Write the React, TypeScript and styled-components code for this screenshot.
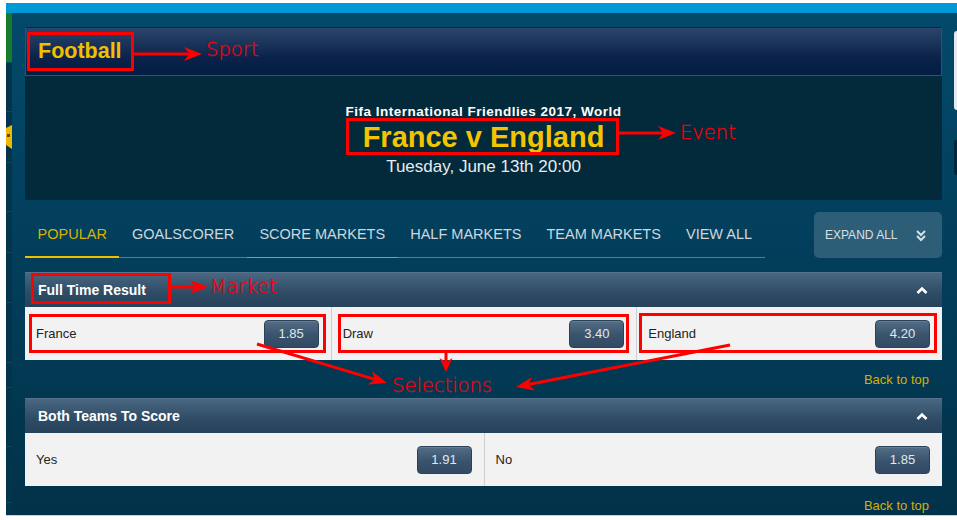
import React from "react";
import styled, { createGlobalStyle } from "styled-components";

const Global = createGlobalStyle`
  html, body { margin: 0; padding: 0; background: #ffffff; }
  body { font-family: "Liberation Sans", Arial, sans-serif; }
  * { box-sizing: border-box; }
`;

const Page = styled.div`
  position: relative;
  width: 957px;
  height: 520px;
  padding: 3px 0 0 6px;
  background: #ffffff;
  overflow: hidden;
`;

const TopBar = styled.div`
  height: 10px;
  background: #0098d5;
`;

const Body = styled.div`
  display: flex;
  height: 503px;
  overflow: hidden;
  background: linear-gradient(#03496a, #023f5c 45%, #02324a);
  border-bottom: 1px solid #c9d3d8;
`;

const LeftRail = styled.aside`
  width: 6px;
  flex: none;
  display: flex;
  flex-direction: column;
  background: #02344c;
`;

const RailCell = styled.div<{ $h: number; $c?: string }>`
  height: ${(p) => p.$h}px;
  flex: none;
  background: ${(p) => p.$c || "#02344c"};
  border-bottom: 1px solid #0b4863;
  display: flex;
  align-items: center;
  overflow: hidden;
`;

const RightRail = styled.aside`
  width: 3px;
  flex: none;
  margin-left: auto;
  display: flex;
  flex-direction: column;
  padding-top: 18px;
  gap: 30px;
`;

const RightBlock = styled.div<{ $h: number; $c: string }>`
  height: ${(p) => p.$h}px;
  flex: none;
  background: ${(p) => p.$c};
  border-radius: 3px 0 0 3px;
`;

const Main = styled.main`
  width: 917px;
  flex: none;
  margin-left: 13px;
  padding-top: 14px;
  display: flex;
  flex-direction: column;
  & > * {
    flex-shrink: 0;
  }
`;

const SportHeader = styled.header`
  height: 49px;
  display: flex;
  align-items: center;
  padding-left: 12px;
  border: 1px solid #34506f;
  border-top-color: #0d2442;
  background: linear-gradient(#2c456a, #0a2249 65%, #041d45);
`;

const SportName = styled.h1`
  margin: 0;
  font-size: 21.5px;
  font-weight: 700;
  color: #f2bf00;
  line-height: 1;
`;

const EventInfo = styled.section`
  height: 124px;
  background: #022a3b;
  display: flex;
  flex-direction: column;
  align-items: center;
  padding-top: 28px;
`;

const Competition = styled.div`
  font-size: 13.5px;
  line-height: 16px;
  font-weight: 700;
  letter-spacing: 0.5px;
  color: #ffffff;
`;

const EventTitle = styled.h2`
  margin: 1px 0 0;
  font-size: 29px;
  line-height: 32px;
  font-weight: 700;
  color: #f5c400;
`;

const EventDate = styled.div`
  margin-top: 4px;
  font-size: 17px;
  line-height: 20px;
  color: #e6ecef;
`;

const TabsRow = styled.div`
  margin-top: 12px;
  height: 46px;
  display: flex;
  justify-content: space-between;
`;

const TabList = styled.nav`
  display: flex;
  align-items: flex-start;
  height: 46px;
  border-bottom: 1px solid #577a8e;
`;

const Tab = styled.div<{ $active?: boolean; $hover?: boolean }>`
  height: 46px;
  margin-bottom: -1px;
  padding: 0 12.5px 0 12.6px;
  display: flex;
  align-items: center;
  font-size: 14.5px;
  color: ${(p) => (p.$active ? "#d9b300" : "#cdd7de")};
  border-bottom: ${(p) =>
    p.$active ? "2px solid #f0c000" : p.$hover ? "1px solid #a89c3c" : "1px solid transparent"};
  padding-bottom: ${(p) => (p.$active ? "0" : "1px")};
  white-space: nowrap;
`;

const ExpandButton = styled.button`
  width: 128px;
  height: 46px;
  border: 0;
  border-radius: 5px;
  background: #2d5e77;
  padding: 0 15px 0 11px;
  display: flex;
  align-items: center;
  justify-content: space-between;
  font-family: "Liberation Sans", Arial, sans-serif;
  font-size: 12px;
  color: #d6e0e6;
`;

const Market = styled.section`
  display: flex;
  flex-direction: column;
  & > * {
    flex-shrink: 0;
  }
`;

const FirstMarket = styled(Market)`
  margin-top: 14px;
`;

const MarketHeader = styled.div`
  height: 35px;
  display: flex;
  align-items: center;
  justify-content: space-between;
  padding: 0 14px 0 13px;
  border-top: 1px solid #56728c;
  background: linear-gradient(#4a6781, #2e4b65 60%, #27425b);
`;

const MarketName = styled.h3`
  margin: 0;
  font-size: 14px;
  font-weight: 700;
  color: #ffffff;
`;

const SelectionRow = styled.div<{ $cols: number }>`
  height: 53px;
  display: grid;
  grid-template-columns: repeat(${(p) => p.$cols}, 1fr);
  background: #f2f2f2;
`;

const Selection = styled.div`
  display: flex;
  align-items: center;
  justify-content: space-between;
  padding: 0 12px 0 11px;
  & + & {
    border-left: 1px solid #cfcfcf;
  }
`;

const SelectionName = styled.span`
  font-size: 13px;
  color: #222222;
`;

const Odds = styled.button`
  width: 55px;
  height: 28px;
  border: 1px solid #2b4157;
  border-radius: 4px;
  background: linear-gradient(#536d87, #3a536d 55%, #324a63);
  box-shadow: inset 0 1px 0 rgba(255, 255, 255, 0.12);
  font-family: "Liberation Sans", Arial, sans-serif;
  font-size: 13px;
  color: #e1e7ed;
  padding: 0;
`;

const BackToTop = styled.div`
  height: 38px;
  display: flex;
  align-items: center;
  justify-content: flex-end;
  padding-right: 13px;
  font-size: 13px;
  color: #d6b000;
`;

const Overlay = styled.svg`
  position: absolute;
  left: 0;
  top: 0;
  pointer-events: none;
`;

const Note = styled.span<{ $x: number; $y: number }>`
  position: absolute;
  left: ${(p) => p.$x}px;
  top: ${(p) => p.$y}px;
  font-family: "DejaVu Sans", sans-serif;
  font-weight: 200;
  font-size: 19.5px;
  line-height: 1;
  color: #f0000c;
  white-space: nowrap;
  -webkit-text-stroke: 0.3px #f0000c;
`;

const RED = "#ff0000";

function Arrow({ x1, y1, x2, y2, len = 18, w = 14 }: { x1: number; y1: number; x2: number; y2: number; len?: number; w?: number }) {
  const dx = x2 - x1;
  const dy = y2 - y1;
  const d = Math.hypot(dx, dy);
  const ux = dx / d;
  const uy = dy / d;
  const bx = x2 - ux * len;
  const by = y2 - uy * len;
  const px = -uy * (w / 2);
  const py = ux * (w / 2);
  const nx = x2 - ux * (len * 0.7);
  const ny = y2 - uy * (len * 0.7);
  return (
    <g>
      <line x1={x1} y1={y1} x2={nx} y2={ny} stroke={RED} strokeWidth={3} />
      <polygon points={`${x2},${y2} ${bx + px},${by + py} ${nx},${ny} ${bx - px},${by - py}`} fill={RED} />
    </g>
  );
}

function Box({ x, y, w, h }: { x: number; y: number; w: number; h: number }) {
  return <rect x={x + 1.5} y={y + 1.5} width={w - 3} height={h - 3} fill="none" stroke={RED} strokeWidth={3} />;
}

const ChevronsDown = () => (
  <svg width="12" height="13" viewBox="0 0 12 13">
    <polyline points="2,2 6,6 10,2" fill="none" stroke="#d6e0e6" strokeWidth="2" />
    <polyline points="2,7 6,11 10,7" fill="none" stroke="#d6e0e6" strokeWidth="2" />
  </svg>
);

const ChevronUp = () => (
  <svg width="12" height="8" viewBox="0 0 12 8">
    <polyline points="1.5,7 6,2.5 10.5,7" fill="none" stroke="#ffffff" strokeWidth="2.6" />
  </svg>
);

const RailIcon = () => (
  <svg width="6" height="24" viewBox="0 0 6 24">
    <polygon points="0,3 6,0 6,24 0,20" fill="#f0b800" />
    <rect x="1" y="9" width="3" height="3" fill="#5a4a10" />
  </svg>
);

type Sel = { name: string; odds: string };

const markets: { name: string; sels: Sel[] }[] = [
  {
    name: "Full Time Result",
    sels: [
      { name: "France", odds: "1.85" },
      { name: "Draw", odds: "3.40" },
      { name: "England", odds: "4.20" },
    ],
  },
  {
    name: "Both Teams To Score",
    sels: [
      { name: "Yes", odds: "1.91" },
      { name: "No", odds: "1.85" },
    ],
  },
];

const tabs = ["POPULAR", "GOALSCORER", "SCORE MARKETS", "HALF MARKETS", "TEAM MARKETS", "VIEW ALL"];

function MarketBlock({ m, first }: { m: { name: string; sels: Sel[] }; first?: boolean }) {
  const Wrap = first ? FirstMarket : Market;
  return (
    <Wrap>
      <MarketHeader>
        <MarketName>{m.name}</MarketName>
        <ChevronUp />
      </MarketHeader>
      <SelectionRow $cols={m.sels.length}>
        {m.sels.map((s) => (
          <Selection key={s.name}>
            <SelectionName>{s.name}</SelectionName>
            <Odds>{s.odds}</Odds>
          </Selection>
        ))}
      </SelectionRow>
      <BackToTop>Back to top</BackToTop>
    </Wrap>
  );
}

export default function App() {
  return (
    <>
      <Global />
      <Page>
        <TopBar />
        <Body>
          <LeftRail>
            <RailCell $h={50} $c="#1a7a2c" />
            <RailCell $h={49} />
            <RailCell $h={51}>
              <RailIcon />
            </RailCell>
            <RailCell $h={49} />
            <RailCell $h={41} />
            <RailCell $h={50} />
            <RailCell $h={60} />
            <RailCell $h={25} />
            <RailCell $h={59} />
            <RailCell $h={56} />
          </LeftRail>
          <Main>
            <SportHeader>
              <SportName>Football</SportName>
            </SportHeader>
            <EventInfo>
              <Competition>Fifa International Friendlies 2017, World</Competition>
              <EventTitle>France v England</EventTitle>
              <EventDate>Tuesday, June 13th 20:00</EventDate>
            </EventInfo>
            <TabsRow>
              <TabList>
                {tabs.map((t, i) => (
                  <Tab key={t} $active={i === 0} $hover={i === 2}>
                    {t}
                  </Tab>
                ))}
              </TabList>
              <ExpandButton>
                EXPAND ALL
                <ChevronsDown />
              </ExpandButton>
            </TabsRow>
            {markets.map((m, i) => (
              <MarketBlock key={m.name} m={m} first={i === 0} />
            ))}
          </Main>
          <RightRail>
            <RightBlock $h={79} $c="#e6ebee" />
            <RightBlock $h={35} $c="#02243a" />
          </RightRail>
        </Body>

        <Overlay width="957" height="520" viewBox="0 0 957 520">
          <Box x={27} y={32} w={107} h={39} />
          <Box x={346} y={118} w={273} h={37} />
          <Box x={31} y={273} w={140} h={31} />
          <Box x={29} y={314} w={297} h={39} />
          <Box x={338} y={314} w={291} h={39} />
          <Box x={639} y={313} w={298} h={40} />
          <Arrow x1={134} y1={54} x2={202} y2={54} />
          <Arrow x1={619} y1={133} x2={676} y2={133} />
          <Arrow x1={171} y1={287} x2={208} y2={287} />
          <Arrow x1={257} y1={344} x2={387} y2={383} />
          <Arrow x1={446} y1={352} x2={446} y2={372} len={14} w={13} />
          <Arrow x1={730} y1={345} x2={516} y2={387} />
        </Overlay>
        <Note $x={206} $y={39.5}>Sport</Note>
        <Note $x={680} $y={123}>Event</Note>
        <Note $x={210} $y={276.5}>Market</Note>
        <Note $x={392} $y={376}>Selections</Note>
      </Page>
    </>
  );
}
